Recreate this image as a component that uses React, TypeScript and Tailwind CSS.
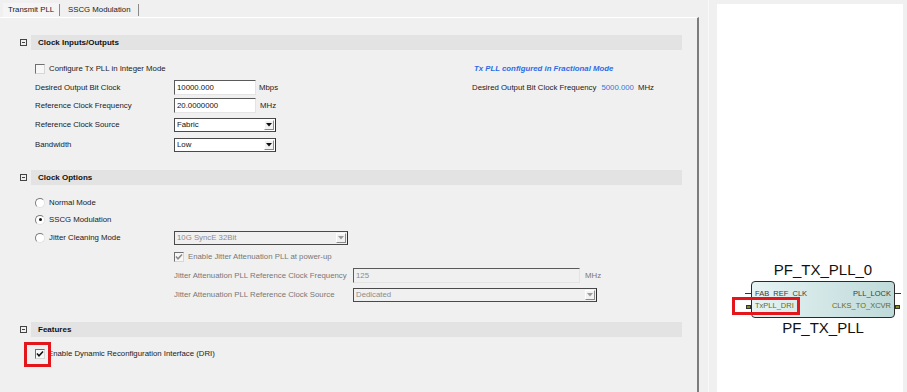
import React from "react";

function Check({ on, dis }: { on?: boolean; dis?: boolean }) {
  return (
    <span className="flex h-[10px] w-[10px] shrink-0 items-center justify-center border border-t-[#6f6f6f] border-l-[#6f6f6f] border-r-[#d6d6d6] border-b-[#d6d6d6] bg-[#f7f7f7]">
      {on && (
        <svg width="8" height="8" viewBox="0 0 8 8">
          <path d="M1 3.6 L3 5.8 L7 1.4" fill="none" stroke={dis ? "#8a8a8a" : "#111"} strokeWidth="1.5" />
        </svg>
      )}
    </span>
  );
}

function Radio({ on }: { on?: boolean }) {
  return (
    <span className="flex h-[10px] w-[10px] shrink-0 items-center justify-center rounded-full border border-t-[#7a7a7a] border-l-[#7a7a7a] border-r-[#e2e2e2] border-b-[#e2e2e2] bg-white">
      {on && <span className="h-[3px] w-[3px] rounded-full bg-[#111]" />}
    </span>
  );
}

function Field({ value, w, dis }: { value: string; w: string; dis?: boolean }) {
  return (
    <div
      className={`flex h-[15px] items-center border border-t-[#5a5a5a] border-l-[#5a5a5a] border-r-[#e4e4e4] border-b-[#e4e4e4] pl-[2px] ${w} ${
        dis ? "bg-[#f0f0f0] text-[#8c8c8c]" : "bg-white text-[#111]"
      }`}
    >
      {value}
    </div>
  );
}

function Drop({ value, w, dis }: { value: string; w: string; dis?: boolean }) {
  return (
    <div
      className={`flex h-[14px] items-center justify-between border border-[#4a4a4a] border-r-[#2e2e2e] pl-[2px] ${w} ${
        dis ? "bg-[#f0f0f0] text-[#8c8c8c]" : "bg-white text-[#111]"
      }`}
    >
      <span>{value}</span>
      <span className="mr-[1px] flex h-[10px] w-[10px] items-center justify-center border border-t-white border-l-white border-r-[#8a8a8a] border-b-[#8a8a8a] bg-[#f2f2f2]">
        <svg width="6" height="4" viewBox="0 0 6 4">
          <path d="M0 0 H6 L3 3.5 Z" fill={dis ? "#9a9a9a" : "#111"} />
        </svg>
      </span>
    </div>
  );
}

function Header({ title }: { title: string }) {
  return (
    <div className="flex items-center">
      <span className="ml-[20px] flex h-[7px] w-[7px] items-center justify-center border border-[#444]">
        <span className="h-px w-[3px] bg-[#444]" />
      </span>
      <div className="ml-[4px] mr-[15px] flex h-[15px] flex-1 items-center bg-[#e3e3e3] pl-[7px] text-[8px] font-bold text-[#111]">
        {title}
      </div>
    </div>
  );
}

export default function App() {
  return (
    <div className="relative flex h-[392px] w-[907px] overflow-hidden bg-[#f0f0f0] font-['Liberation_Sans',Arial,sans-serif] text-[7.8px] text-[#1a1a1a]">
      {/* left: tabbed property page */}
      <div className="flex w-[699px] flex-col">
        <div className="flex h-[17px] items-end">
          <div className="ml-[3px] flex h-[14px] items-center bg-[#f5f5f5] px-[5px]">Transmit PLL</div>
          <span className="mb-[1px] h-[12px] w-px bg-[#8a8a8a]" />
          <div className="flex h-[14px] items-center px-[8px]">SSCG Modulation</div>
          <span className="mb-[1px] h-[12px] w-px bg-[#8a8a8a]" />
        </div>
        <div className="flex flex-1 flex-col border-t border-t-white border-r-2 border-r-[#7d7d7d] pt-[17px]">
          <Header title="Clock Inputs/Outputs" />
          <div className="flex pt-[12px]">
            <div className="flex w-[472px] flex-col pl-[35px]">
              <div className="flex h-[13px] items-center gap-[4px]">
                <Check />
                <span>Configure Tx PLL in Integer Mode</span>
              </div>
              <div className="mt-[5px] flex items-center">
                <span className="w-[139px]">Desired Output Bit Clock</span>
                <Field value="10000.000" w="w-[82px]" />
                <span className="ml-[3px]">Mbps</span>
              </div>
              <div className="mt-[3px] flex items-center">
                <span className="w-[139px]">Reference Clock Frequency</span>
                <Field value="20.0000000" w="w-[82px]" />
                <span className="ml-[4px]">MHz</span>
              </div>
              <div className="mt-[5px] flex items-center">
                <span className="w-[139px]">Reference Clock Source</span>
                <Drop value="Fabric" w="w-[102px]" />
              </div>
              <div className="mt-[6px] flex items-center">
                <span className="w-[139px]">Bandwidth</span>
                <Drop value="Low" w="w-[102px]" />
              </div>
            </div>
            <div className="flex flex-col">
              <div className="flex h-[13px] items-center pl-[2px] font-bold italic text-[#2c6ce6]">
                Tx PLL configured in Fractional Mode
              </div>
              <div className="mt-[5px] flex h-[15px] items-center">
                <span>Desired Output Bit Clock Frequency</span>
                <span className="ml-[5px] text-[#3874d8]">5000.000</span>
                <span className="ml-[4px]">MHz</span>
              </div>
            </div>
          </div>

          <div className="mt-[18px]">
            <Header title="Clock Options" />
          </div>
          <div className="flex flex-col pl-[35px] pt-[11px]">
            <div className="flex h-[13px] items-center gap-[4px]">
              <Radio />
              <span>Normal Mode</span>
            </div>
            <div className="mt-[4px] flex h-[13px] items-center gap-[4px]">
              <Radio on />
              <span>SSCG Modulation</span>
            </div>
            <div className="mt-[5px] flex items-center">
              <div className="flex w-[139px] items-center gap-[4px]">
                <Radio />
                <span>Jitter Cleaning Mode</span>
              </div>
              <Drop value="10G SyncE 32Bit" w="w-[174px]" dis />
            </div>
            <div className="mt-[5px] flex h-[13px] items-center gap-[4px] pl-[139px] text-[#777]">
              <Check on dis />
              <span>Enable Jitter Attenuation PLL at power-up</span>
            </div>
            <div className="mt-[5px] flex items-center pl-[139px] text-[#777]">
              <span className="w-[179px]">Jitter Attenuation PLL Reference Clock Frequency</span>
              <Field value="125" w="w-[227px]" dis />
              <span className="ml-[5px]">MHz</span>
            </div>
            <div className="mt-[5px] flex items-center pl-[139px] text-[#777]">
              <span className="w-[179px]">Jitter Attenuation PLL Reference Clock Source</span>
              <Drop value="Dedicated" w="w-[244px]" dis />
            </div>
          </div>

          <div className="mt-[20px]">
            <Header title="Features" />
          </div>
          <div className="mt-[10px] flex h-[13px] items-center gap-[3px] pl-[35px]">
            <Check on />
            <span>Enable Dynamic Reconfiguration Interface (DRI)</span>
          </div>
        </div>
      </div>

      {/* splitter */}
      <div className="ml-[9px] w-px bg-[#f8f8f8]" />

      {/* right: canvas */}
      <div className="relative ml-[8px] mt-[4px] w-[186px] bg-white">
        <div className="absolute left-[28px] top-[256px] flex w-[156px] flex-col items-center">
          <div className="h-[20px] text-[15px] leading-[20px] text-[#111]">PF_TX_PLL_0</div>
          <div className="mt-[1px] flex w-full">
            <div className="flex w-[6px] flex-col pt-[12px]">
              <span className="h-px w-[6px] bg-[#333]" />
              <span className="ml-[1px] mt-[11px] h-[4px] w-[5px] border border-[#333] bg-[#8a8a1e]" />
            </div>
            <div className="flex h-[37px] w-[144px] flex-col rounded-[4px] border border-[#2a2a2a] bg-linear-to-r from-[#e6f3f3] to-[#bfdada] px-[3px] pt-[6px] text-[7.5px]">
              <div className="flex h-[12px] items-center justify-between text-[#3a3a3a]">
                <span>FAB_REF_CLK</span>
                <span>PLL_LOCK</span>
              </div>
              <div className="flex h-[12px] items-center justify-between text-[#6b6b12]">
                <span>TxPLL_DRI</span>
                <span>CLKS_TO_XCVR</span>
              </div>
            </div>
            <div className="flex w-[6px] flex-col pt-[12px]">
              <span className="h-px w-[6px] bg-[#333]" />
              <span className="mt-[11px] h-[4px] w-[5px] border border-[#333] bg-[#8a8a1e]" />
            </div>
          </div>
          <div className="mt-[1px] h-[18px] text-[15px] leading-[18px] text-[#111]">PF_TX_PLL</div>
        </div>
        <div className="absolute left-[15px] top-[293px] h-[18px] w-[68px] border-[3px] border-[#e3161c]" />
      </div>

      <div className="absolute left-[24px] top-[342px] h-[25px] w-[27px] border-[3px] border-[#e3161c]" />
    </div>
  );
}
